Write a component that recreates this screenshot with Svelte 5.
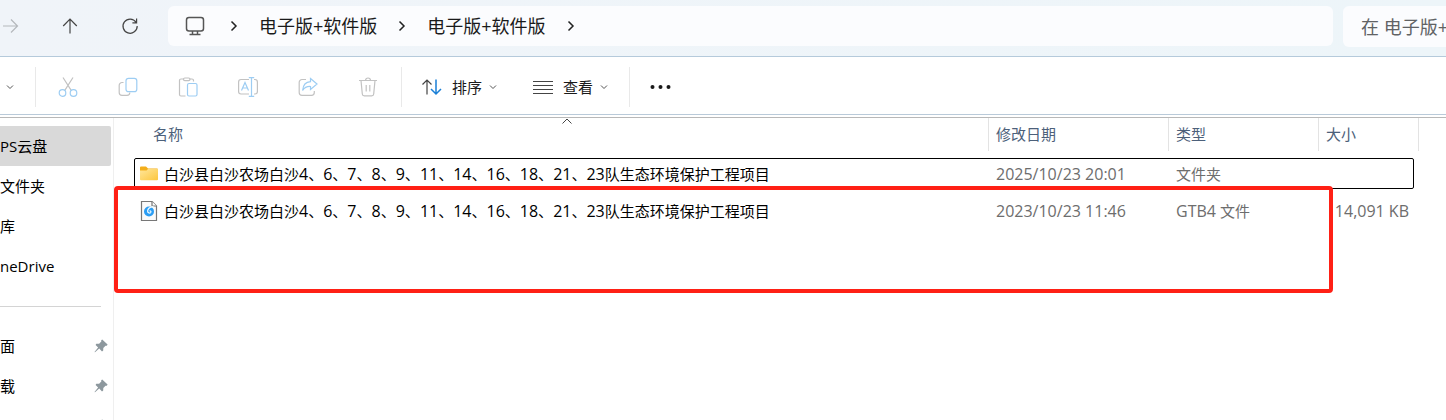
<script lang="ts">
	type Row = { kind: 'folder' | 'file'; name: string; date: string; type: string; size: string };

	const crumbs = ['电子版+软件版', '电子版+软件版'];
	const places = ['PS云盘', '文件夹', '库', 'neDrive'];
	const pinned = ['面', '载', ''];
	const rows: Row[] = [
		{ kind: 'folder', name: '白沙县白沙农场白沙4、6、7、8、9、11、14、16、18、21、23队生态环境保护工程项目', date: '2025/10/23 20:01', type: '文件夹', size: '' },
		{ kind: 'file', name: '白沙县白沙农场白沙4、6、7、8、9、11、14、16、18、21、23队生态环境保护工程项目', date: '2023/10/23 11:46', type: 'GTB4 文件', size: '14,091 KB' }
	];

	let selectedPlace = $state(0);
	let focusedRow = $state(0);

	// Latin runs are set one size up from the Chinese text around them
	function runs(text: string) {
		return text.match(/[\x20-\x7e]+|[^\x20-\x7e]+/g) ?? [];
	}

	function isLatin(run: string) {
		return run.charCodeAt(0) < 127;
	}
</script>

{#snippet mixed(text: string)}{#each runs(text) as run}<span class:latin={isLatin(run)}>{run}</span>{/each}{/snippet}

{#snippet chevronDown()}
	<svg class="chevron" width="8" height="8" viewBox="0 0 8 8"><path d="M1 2.5 4 5.5 7 2.5" /></svg>
{/snippet}

{#snippet chevronRight()}
	<svg class="crumb-arrow" width="8" height="12" viewBox="0 0 8 12"><path d="M1.5 1.5 6 6 1.5 10.5" /></svg>
{/snippet}

<div class="explorer">
	<header class="address-row">
		<nav class="history" aria-label="导航">
			<button type="button" class="forward" disabled aria-label="前进">
				<svg width="18" height="18" viewBox="0 0 18 18"><path d="M1 9H15.5M9 2.5 15.5 9 9 15.5" /></svg>
			</button>
			<button type="button" aria-label="向上">
				<svg width="18" height="18" viewBox="0 0 18 18"><path d="M9 16.5V2.2M2.2 9 9 2.2 15.8 9" /></svg>
			</button>
			<button type="button" aria-label="刷新">
				<svg width="18" height="18" viewBox="0 0 18 18"><path d="M15 5.2A7.1 7.1 0 1 0 16.2 9M15.6 1.6V5.8H11.4" /></svg>
			</button>
		</nav>
		<div class="address">
			<svg class="monitor" width="20" height="20" viewBox="0 0 20 20"><rect x="1.5" y="1.5" width="17" height="13.5" rx="2.5" /><path d="M7.5 15V18M12.5 15V18M4.5 18.5H15.5" /></svg>
			{@render chevronRight()}
			{#each crumbs as crumb}
				<button type="button" class="crumb">{crumb}</button>
				{@render chevronRight()}
			{/each}
		</div>
		<input class="search" type="text" placeholder="在 电子版+" aria-label="搜索" />
	</header>

	<div class="toolbar" role="toolbar">
		<button type="button" class="new" aria-label="新建">{@render chevronDown()}</button>
		<span class="separator"></span>
		<button type="button" class="tool" disabled aria-label="剪切">
			<svg width="20" height="20" viewBox="0 0 20 20"><path d="M5 .5 13.2 13.4M15 .5 6.8 13.4" /><g class="blue"><circle cx="4.5" cy="16" r="3.3" /><circle cx="15.5" cy="16" r="3.3" /></g></svg>
		</button>
		<button type="button" class="tool" disabled aria-label="复制">
			<svg width="20" height="20" viewBox="0 0 20 20"><path d="M5.5 5.5H4A2.8 2.8 0 0 0 1.2 8.3V15.5A2.8 2.8 0 0 0 4 18.3H9A2.8 2.8 0 0 0 11.8 15.5" /><rect class="blue" x="8" y="1.3" width="10.8" height="13.4" rx="2.5" /></svg>
		</button>
		<button type="button" class="tool" disabled aria-label="粘贴">
			<svg width="20" height="20" viewBox="0 0 20 20"><path d="M7.5 19H3A1.5 1.5 0 0 1 1.5 17.5V3.5A1.5 1.5 0 0 1 3 2H5.5M11.5 2H14A1.5 1.5 0 0 1 15.5 3.5V4.5" /><rect x="5.5" y="1" width="6.5" height="2.6" rx="1.3" /><rect class="blue" x="9.5" y="6.5" width="9.5" height="12.5" rx="1.5" /></svg>
		</button>
		<button type="button" class="tool" disabled aria-label="重命名">
			<svg width="20" height="20" viewBox="0 0 20 20"><path d="M11 2.5H3A2.5 2.5 0 0 0 .6 5V14.5A2.5 2.5 0 0 0 3 17H11M16 2.5H17A2.5 2.5 0 0 1 19.4 5V14.5A2.5 2.5 0 0 1 17 17H16" /><path class="blue" d="M3.5 13.5 7 5.5 10.5 13.5M4.7 11H9.3M13.5 .8V19.2M10.8 .7H16.2M10.8 19.3H16.2" /></svg>
		</button>
		<button type="button" class="tool" disabled aria-label="共享">
			<svg width="20" height="20" viewBox="0 0 20 20"><path d="M8 2.5H4A2.8 2.8 0 0 0 1.2 5.3V15.5A2.8 2.8 0 0 0 4 18.3H13.5A2.8 2.8 0 0 0 16.3 15.5V14" /><path class="blue" d="M12.5 1.5 19 7 12.5 12.5V9.5C8.5 9.2 6.3 10.8 4.6 13.5 5 8.5 7.8 5 12.5 4.7Z" /></svg>
		</button>
		<button type="button" class="tool" disabled aria-label="删除">
			<svg width="20" height="20" viewBox="0 0 20 20"><path d="M1 3.5H19M7.5 3.5A2.5 2.5 0 0 1 12.5 3.5M3 3.5 4.3 17A2 2 0 0 0 6.3 18.9H13.7A2 2 0 0 0 15.7 17L17 3.5M8.2 8V14.5M11.8 8V14.5" /></svg>
		</button>
		<span class="separator"></span>
		<button type="button" class="menu">
			<svg class="lead" width="20" height="20" viewBox="0 0 20 20"><path d="M5 17.5V3M.5 7.5 5 3 9.5 7.5" /><path class="sort-down" d="M14 2.5V17M9 12 14 17 19 12" /></svg>
			<span>排序</span>
			{@render chevronDown()}
		</button>
		<button type="button" class="menu">
			<svg class="lead" width="20" height="20" viewBox="0 0 20 20"><path d="M0 4.5H20M0 8.5H20M0 12.5H20M0 16.5H20" /></svg>
			<span>查看</span>
			{@render chevronDown()}
		</button>
		<span class="separator"></span>
		<button type="button" class="menu" aria-label="查看更多">
			<svg class="dots" width="22" height="6" viewBox="0 0 22 6"><circle cx="2.5" cy="3" r="2" /><circle cx="10.5" cy="3" r="2" /><circle cx="18.5" cy="3" r="2" /></svg>
		</button>
	</div>

	<div class="content">
		<aside class="sidebar">
			{#each places as place, i}
				<button type="button" class="place" class:selected={selectedPlace === i} onclick={() => (selectedPlace = i)}>{place}</button>
			{/each}
			<div class="divider"></div>
			{#each pinned as place}
				<div class="place pinned">
					<span>{place}</span>
					<svg width="14" height="14" viewBox="0 0 14 14"><path d="M8.2.4 13.6 5.6 12.8 6.8 11.5 6.7 9.3 8.9 9.2 11.6 8 12.4 5.2 9.6 1 13.3.5 12.9 4.1 8.5 1.6 6 2.3 4.8 5.1 4.7 7.3 2.6 7.2 1.2Z" /></svg>
				</div>
			{/each}
		</aside>

		<main class="files">
			<table>
				<thead>
					<tr>
						<th>
							<div class="heading heading-name">
								名称
								<svg class="sort-mark" width="12" height="6" viewBox="0 0 12 6"><path d="M1.5 5.5 6 1 10.5 5.5" /></svg>
							</div>
						</th>
						<th class="col-date"><div class="heading">修改日期</div></th>
						<th class="col-type"><div class="heading">类型</div></th>
						<th class="col-size"><div class="heading">大小</div></th>
					</tr>
				</thead>
				<tbody>
					{#each rows as row, i}
						<tr class:focused={focusedRow === i} onclick={() => (focusedRow = i)}>
							<td>
								<div class="name">
									{#if row.kind === 'folder'}
										<svg width="18" height="20" viewBox="0 0 18 20">
											<defs><linearGradient id="folder" x1="0" y1="0" x2="1" y2="1"><stop offset="0" stop-color="#ffe69a" /><stop offset="1" stop-color="#fcc63d" /></linearGradient></defs>
											<path d="M0 3.5A1 1 0 0 1 1 2.5H6L8 4.5H17A1 1 0 0 1 18 5.5V10H0Z" fill="#f3ae1b" />
											<path d="M0 6.5H6.5L8 5H18V15.5A1 1 0 0 1 17 16.3H1A1 1 0 0 1 0 15.5Z" fill="url(#folder)" />
										</svg>
									{:else}
										<svg width="18" height="20" viewBox="0 0 18 20">
											<path d="M1.5.5H12L16.5 5V19.5H1.5Z" fill="#fafafa" stroke="#777" />
											<path d="M12 .5V5H16.5" fill="#fff" stroke="#777" />
											<circle cx="9" cy="10.5" r="5" fill="#2a9df4" />
											<path d="M13.5 5.5C10 6 7.8 7.5 7.6 10 7.6 12.2 10 12.6 10.8 11.2 11.2 10.3 10.4 9.7 9.6 10.1" fill="none" stroke="#e9f8ff" stroke-width="1.3" />
										</svg>
									{/if}
									<span>{@render mixed(row.name)}</span>
								</div>
							</td>
							<td class="latin">{row.date}</td>
							<td>{@render mixed(row.type)}</td>
							<td class="size latin">{row.size}</td>
						</tr>
					{/each}
				</tbody>
			</table>
			<div class="highlight"></div>
		</main>
	</div>
</div>

<style>
	:global(body) { background: #fff; }
	.explorer { display: flex; flex-direction: column; height: 100vh; overflow: hidden; color: #000; font-family: 'Open Sans', 'Noto Sans CJK SC', sans-serif; font-size: 15px; line-height: 20px; }
	.latin { font-size: 16px; }
	button { display: flex; align-items: center; padding: 0; border: none; background: none; color: inherit; font: inherit; }
	svg { flex: none; fill: none; stroke: #444; stroke-width: 1.2; }

	.address-row { display: flex; align-items: flex-start; height: 50px; padding-top: 6px; border-bottom: 1px solid #b5cadb; background: linear-gradient(90deg, #f0f4f9, #edf5f9); }
	.history { display: flex; flex: none; height: 40px; padding-right: 8px; }
	.history button { justify-content: center; width: 60px; }
	.history .forward { justify-content: flex-start; width: 40px; padding-left: 2px; }
	.forward svg { stroke: #b4b8bc; }
	.address { display: flex; flex: 1; align-items: center; min-width: 0; height: 40px; padding-left: 17px; border-radius: 6px; background: #fbfcfe; font-size: 18px; color: #1a1a1a; }
	.crumb { margin: 0 21px; white-space: nowrap; }
	.monitor { margin-right: 25px; stroke: #555; stroke-width: 1.5; }
	.crumb-arrow { stroke: #222; stroke-width: 1.5; }
	.search { box-sizing: border-box; flex: none; width: 103px; height: 41px; margin-left: 10px; padding: 0 0 0 18px; border: none; border-radius: 6px 0 0 6px; background: #fbfcfe; font: inherit; font-size: 18px; }
	.search::placeholder { color: #606264; opacity: 1; }

	.toolbar { display: flex; flex: none; align-items: center; height: 57px; border-bottom: 1px solid #b9cad9; color: #1a1a1a; }
	.toolbar button { height: 40px; padding-top: 3px; }
	.chevron { stroke: #555; stroke-width: 1; }
	.separator { width: 1px; height: 40px; margin: 3px 2px 0 3px; background: #e9e9e9; }
	.toolbar .new { width: 32px; padding-left: 6px; }
	.tool { justify-content: center; width: 60px; }
	.tool svg { stroke: #c2c2c2; }
	.tool .blue { stroke: #9dcdf3; }
	.menu { gap: 7px; padding: 0 18px; }
	.lead { margin-right: 3px; }
	.sort-down { stroke: #1a7fd6; stroke-width: 1.5; }
	.dots { fill: #1a1a1a; stroke: none; }

	.content { display: flex; flex: 1; min-height: 0; margin-top: 2px; border-top: 1px solid #b8b8b8; }
	.sidebar { box-sizing: border-box; flex: none; width: 114px; padding: 8px 2px 0 0; border-right: 1px solid #efefef; overflow: hidden; }
	.place { display: flex; align-items: center; width: 111px; height: 40px; white-space: nowrap; }
	.place.selected { border-radius: 0 2px 2px 0; background: #d9d9d9; }
	.pinned { justify-content: space-between; width: 108px; }
	.pinned svg { fill: #8d989e; stroke: none; }
	.divider { height: 1px; margin: 20px 10px 19px 0; background: #d4d4d4; }

	.files { position: relative; flex: 1; min-width: 0; padding: 0 27px 0 20px; }
	table { width: 100%; border-spacing: 0; table-layout: fixed; }
	th { height: 37px; padding: 0; color: #4c607a; font-weight: 400; text-align: left; vertical-align: top; }
	.heading { position: relative; display: flex; align-items: center; box-sizing: border-box; height: 33px; padding: 0 7px 2px; border-right: 1px solid #e3e3e3; }
	.heading-name { padding-left: 19px; }
	.col-date { width: 180px; }
	.col-type { width: 150px; }
	.col-size { width: 100px; }
	.sort-mark { position: absolute; top: 0; left: 50%; stroke-width: 1; }
	tbody tr { position: relative; }
	td { height: 37px; padding: 0 7px; color: #6d6d6d; white-space: nowrap; }
	td:first-child { padding-left: 6px; color: #000; }
	.name { display: flex; align-items: center; gap: 6px; }
	.name svg { stroke: none; }
	.size { padding-right: 10px; text-align: right; }
	/* the row is the containing block, so the ring spans every cell */
	.focused td:first-child::after { content: ''; position: absolute; inset: 3px 5px 3px 0; border: 1px solid #000; border-radius: 2px; }
	.highlight { position: absolute; top: 68px; right: 113px; left: 0; box-sizing: border-box; height: 107px; border: 4px solid #ff2015; border-radius: 4px; pointer-events: none; }
</style>
